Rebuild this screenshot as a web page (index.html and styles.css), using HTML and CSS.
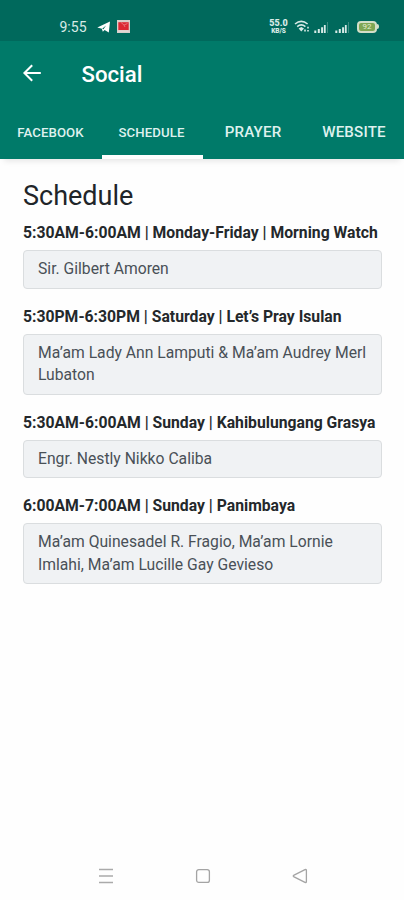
FILE: index.html
```html
<!DOCTYPE html>
<html lang="en">
<head>
<meta charset="utf-8">
<title>Social</title>
<link rel="stylesheet" href="styles.css">
</head>
<body>
<div class="status">
  <span class="time">9:55</span>
  <svg class="plane" width="14" height="12" viewBox="0 0 14 12"><path d="M.3 6.600 13 .6 11.800 11.600 7.600 9 5.800 10.800 4.900 7.800z" fill="#fff"/><path d="M5.200 7.700 9 4.500 6.500 8.300z" fill="#00695c"/></svg>
  <svg class="thumb" width="13" height="13" viewBox="0 0 13 13"><path fill="#d9cfcb" d="M0 0h13v13H0z"/><path fill="#dc2733" d="M1.3 2.2h10.4v8H1.3z"/><path d="M4 2.5 7 5l3.5-1.5M7 5l1 2" fill="none" stroke="#e98085" stroke-width=".8"/><path fill="#e8dcd8" d="M1.3 10.2h10.4v1.4H1.3z"/></svg>
  <span class="speed"><b>55.0</b><i>KB/S</i></span>
  <svg class="wifi" width="16" height="13" viewBox="0 0 16 13" fill="none" stroke="#d8ebe7" stroke-width="1.6"><path d="M1 4Q7.3-1.3 13.6 4M3.2 6.6q4.1-3.3 8.2 0"/><path d="m4.600 8.600 2.700-1.600 2.700 1.600-2.700 3z" fill="#d8ebe7" stroke="none"/><path d="M11 9.600v2M14 6.800v1.600M14 9.900v1.700"/></svg>
  <svg class="signal" width="15" height="12" viewBox="0 0 15 12"><path d="M.3 8.500h2V11h-2zM3.800 7h2v4h-2zM7.100 5.200h2v5.800h-2zM9.900 3h1.800v8H9.900z" fill="#d8ebe7"/><path d="M13.200 0h.8v11h-.8z" fill="#4e978c"/></svg>
  <svg class="signal second" width="15" height="12" viewBox="0 0 15 12"><path d="M.3 8.500h2V11h-2zM3.800 7h2v4h-2zM7.100 5.200h2v5.800h-2zM9.900 3h1.800v8H9.900z" fill="#d8ebe7"/><path d="M13.200 0h.8v11h-.8z" fill="#4e978c"/></svg>
  <span class="battery">92</span>
</div>
<header class="bar">
  <svg width="20" height="18" viewBox="0 0 20 18" fill="none" stroke="#fff" stroke-width="2"><path d="M18.800 9H2.500M10.200 1.200 2.400 9l7.800 7.800"/></svg>
  <span class="title">Social</span>
</header>
<nav class="tabs">
  <span class="tab small">FACEBOOK</span>
  <span class="tab small active">SCHEDULE</span>
  <span class="tab">PRAYER</span>
  <span class="tab">WEBSITE</span>
</nav>
<main>
  <h1>Schedule</h1>
  <section><h2>5:30AM-6:00AM | Monday-Friday | Morning Watch</h2><p>Sir. Gilbert Amoren</p></section>
  <section><h2>5:30PM-6:30PM | Saturday | Let’s Pray Isulan</h2><p>Ma’am Lady Ann Lamputi &amp; Ma’am Audrey Merl<br>Lubaton</p></section>
  <section><h2>5:30AM-6:00AM | Sunday | Kahibulungang Grasya</h2><p>Engr. Nestly Nikko Caliba</p></section>
  <section><h2>6:00AM-7:00AM | Sunday | Panimbaya</h2><p>Ma’am Quinesadel R. Fragio, Ma’am Lornie<br>Imlahi, Ma’am Lucille Gay Gevieso</p></section>
</main>
<footer class="keys">
  <svg width="16" height="16" viewBox="0 0 16 16" fill="none" stroke="#aaa" stroke-width="1.300"><path d="M1 1.500h14M1 8h14M1 14.500h14"/></svg>
  <svg width="16" height="16" viewBox="0 0 16 16" fill="none" stroke="#a4a4a4" stroke-width="1.300"><rect x="1.600" y="1.600" width="12.800" height="12.800" rx="2.200"/></svg>
  <svg width="16" height="16" viewBox="0 0 16 16" fill="none" stroke="#a4a4a4" stroke-width="1.300" stroke-linejoin="round"><path d="M1.600 7.400 13 1.600q1.400-.4 1.400 1v10.800q0 1.400-1.400 1L1.600 8.600q-.8-.6 0-1.200z"/></svg>
</footer>
</body>
</html>
```
FILE: styles.css
```css
* { box-sizing: border-box; }
body {
  margin: 0;
  height: 900px;
  display: flex;
  flex-direction: column;
  background: #fefefe;
  font-family: Roboto, "Liberation Sans", sans-serif;
  color: #212529;
  overflow: hidden;
}
.status {
  height: 41px;
  flex: none;
  display: flex;
  align-items: center;
  padding: 12px 24px 0 59.5px;
  background: #00695c;
  color: #d8ebe7;
}
.time { width: 36.5px; font-size: 14px; }
.plane { margin-left: 1px; }
.thumb { margin-left: 6px; }
.speed {
  margin-left: auto;
  width: 19px;
  display: flex;
  flex-direction: column;
  align-items: center;
}
.speed b { font-size: 9px; line-height: 9px; font-weight: 900; }
.speed i { font-size: 6.5px; line-height: 7px; font-weight: 900; font-style: normal; }
.wifi { margin-left: 6px; }
.signal { margin: 2px 0 0 4px; }
.second { margin-left: 6px; }
.battery {
  position: relative;
  width: 20px;
  height: 12px;
  margin: 0 3px 0 7px;
  border: 2px solid #d3dfc8;
  border-radius: 4px;
  background: #7ea653;
  color: #e3edcf;
  font-size: 8px;
  line-height: 8px;
  text-align: center;
}
.battery::after {
  content: "";
  position: absolute;
  right: -4px;
  top: 1.5px;
  width: 2px;
  height: 5px;
  border-radius: 0 2px 2px 0;
  background: #d3dfc8;
}
.bar {
  height: 66px;
  flex: none;
  display: flex;
  align-items: center;
  padding-left: 22px;
  background: #007a69;
}
.bar svg { margin-top: -2px; }
.title { margin-left: 39.5px; font-size: 22.2px; font-weight: 500; color: #fff; padding-bottom: 1px; }
.tabs {
  height: 51.5px;
  flex: none;
  display: grid;
  grid-template-columns: repeat(4, 1fr);
  background: #007a69;
  box-shadow: 0 6px 6px -4px rgba(0, 0, 0, .1);
}
.tab {
  position: relative;
  line-height: 51px;
  text-align: center;
  font-size: 15.1px;
  letter-spacing: .2px;
  padding-left: 1px;
  font-weight: 500;
  color: #dff1ee;
}
.small { font-size: 13.2px; letter-spacing: .1px; padding-left: 0; }
.active::after {
  content: "";
  position: absolute;
  left: 0.5px;
  right: -1px;
  bottom: 0;
  height: 4px;
  background: #fefefe;
}
main { flex: 1; padding: 20.5px 22px 0 23px; }
h1 { margin: 0; font-size: 27px; font-weight: 400; line-height: 34px; }
section { margin-bottom: 16px; }
h2 { margin: 0 0 6px; font-size: 15.73px; font-weight: 700; line-height: 23px; white-space: nowrap; color: #24282b; }
h1 + section { margin-top: 8px; }
p {
  margin: 0;
  padding: 7px 14px;
  border: 1px solid #dadddf;
  border-radius: 4px;
  background: #f0f2f4;
  color: #495057;
  font-size: 15.7px;
  line-height: 22.5px;
  white-space: nowrap;
}
.keys {
  height: 48px;
  flex: none;
  display: flex;
  justify-content: center;
  gap: 81px;
  padding: 16px 0 0 1px;
}
```
